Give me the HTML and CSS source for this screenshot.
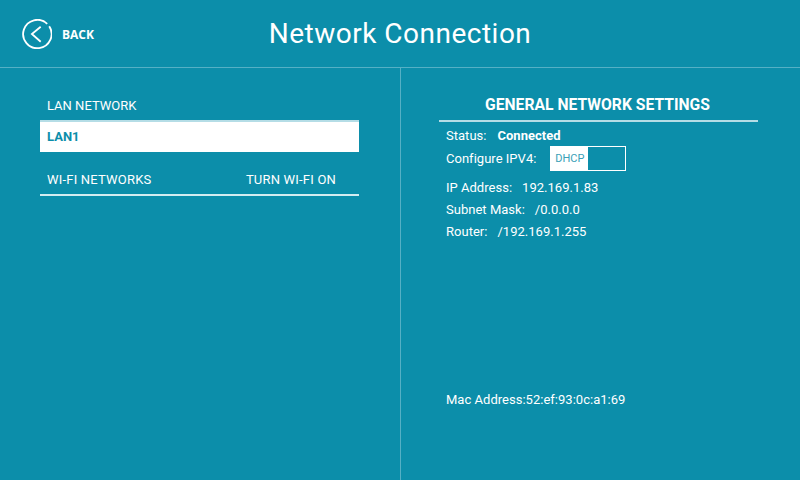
FILE: index.html
```html
<!DOCTYPE html>
<html lang="en">
<head>
  <meta charset="UTF-8">
  <title>Network Connection</title>
  <link rel="stylesheet" href="styles.css">
</head>
<body>
  <div class="screen">
    <!-- Header -->
    <header class="header">
      <div class="back">
        <svg class="back-icon" width="30" height="30" viewBox="0 0 30 30">
          <path d="M25.2 4.8 A14.2 14.2 0 1 0 27.2 7.2" fill="none" stroke="#fff" stroke-width="1.8"/>
          <path d="M18.7 7.7 L9.9 15 L18.7 22.7" fill="none" stroke="#fff" stroke-width="1.8"/>
        </svg>
        <span>BACK</span>
      </div>
      <h1>Network Connection</h1>
    </header>

    <div class="panels">
      <!-- Networks -->
      <section class="left">
        <div class="section-label">LAN NETWORK</div>
        <div class="lan-item">LAN1</div>
        <div class="wifi-row">
          <span>WI-FI NETWORKS</span>
          <span class="wifi-toggle">TURN WI-FI ON</span>
        </div>
      </section>

      <!-- Settings -->
      <section class="right">
        <h2>GENERAL NETWORK SETTINGS</h2>
        <div class="info">
          <div class="row row-status">Status:<strong>Connected</strong></div>
          <div class="row row-config">
            Configure IPV4:
            <div class="switch"><span class="switch-on">DHCP</span></div>
          </div>
          <div class="row row-ip">IP Address:<span>192.169.1.83</span></div>
          <div class="row">Subnet Mask:<span>/0.0.0.0</span></div>
          <div class="row">Router:<span>/192.169.1.255</span></div>
        </div>
        <div class="mac">Mac Address:52:ef:93:0c:a1:69</div>
      </section>
    </div>
  </div>
</body>
</html>
```

FILE: styles.css
```css
body {
  margin: 0;
  background-color: #0c8eaa;
  font-family: Roboto, "Liberation Sans", sans-serif;
  color: #fff;
}

.screen {
  width: 800px;
  height: 480px;
  display: flex;
  flex-direction: column;
  overflow: hidden;
}

.header {
  height: 67px;
  border-bottom: 1px solid #55b0c5;
  display: flex;
  align-items: center;
  justify-content: center;
  position: relative;
}

.header h1 {
  margin: 0;
  font-size: 28px;
  font-weight: 400;
  letter-spacing: 0.5px;
}

.back {
  position: absolute;
  left: 22px;
  top: 19px;
  display: flex;
  align-items: center;
  gap: 10px;
  font-family: "Open Sans", sans-serif;
  font-size: 12px;
  font-weight: 700;
}

.back-icon {
  display: block;
}

.panels {
  flex: 1;
  display: flex;
}

.left {
  width: 401px;
  box-sizing: border-box;
  border-right: 1px solid #55b0c5;
  padding: 30px 41px 0 40px;
  font-size: 13px;
}

.section-label {
  height: 22px;
  padding-left: 7px;
  line-height: 16px;
  border-bottom: 2px solid #b5dde6;
}

.lan-item {
  height: 30px;
  line-height: 29px;
  padding-left: 7px;
  background: #fff;
  color: #0c8eaa;
  font-weight: 700;
}

.wifi-row {
  display: flex;
  justify-content: space-between;
  height: 42px;
  line-height: 55px;
  padding: 0 23px 0 7px;
  letter-spacing: 0.2px;
  border-bottom: 2px solid #d3ecf1;
}

.right {
  flex: 1;
  padding: 28px 42px 0 38px;
  position: relative;
  font-size: 13px;
  letter-spacing: 0.02px;
}

.right h2 {
  margin: 0;
  height: 24px;
  padding-right: 2px;
  line-height: 18px;
  font-size: 15.7px;
  font-weight: 700;
  letter-spacing: 0;
  text-align: center;
  border-bottom: 2px solid #b5dde6;
}

.info {
  padding: 4px 0 0 7px;
}

.row {
  height: 22px;
  line-height: 20px;
  display: flex;
  align-items: center;
}

.row-status {
  height: 20px;
}

.row-config {
  height: 25px;
}

.row-ip {
  margin-top: 6px;
}

.row strong {
  margin-left: 11px;
}

.row span {
  margin-left: 10px;
}

.switch {
  width: 76px;
  height: 25px;
  margin-left: 14px;
  border: 1px solid #fff;
  box-sizing: border-box;
}

.row .switch-on {
  display: block;
  margin-left: 0;
  width: 37px;
  height: 100%;
  background: #fff;
  color: #3a9fb7;
  font-size: 11px;
  line-height: 23px;
  text-align: center;
}

.mac {
  position: absolute;
  left: 45px;
  top: 323px;
  line-height: 18px;
}
```
